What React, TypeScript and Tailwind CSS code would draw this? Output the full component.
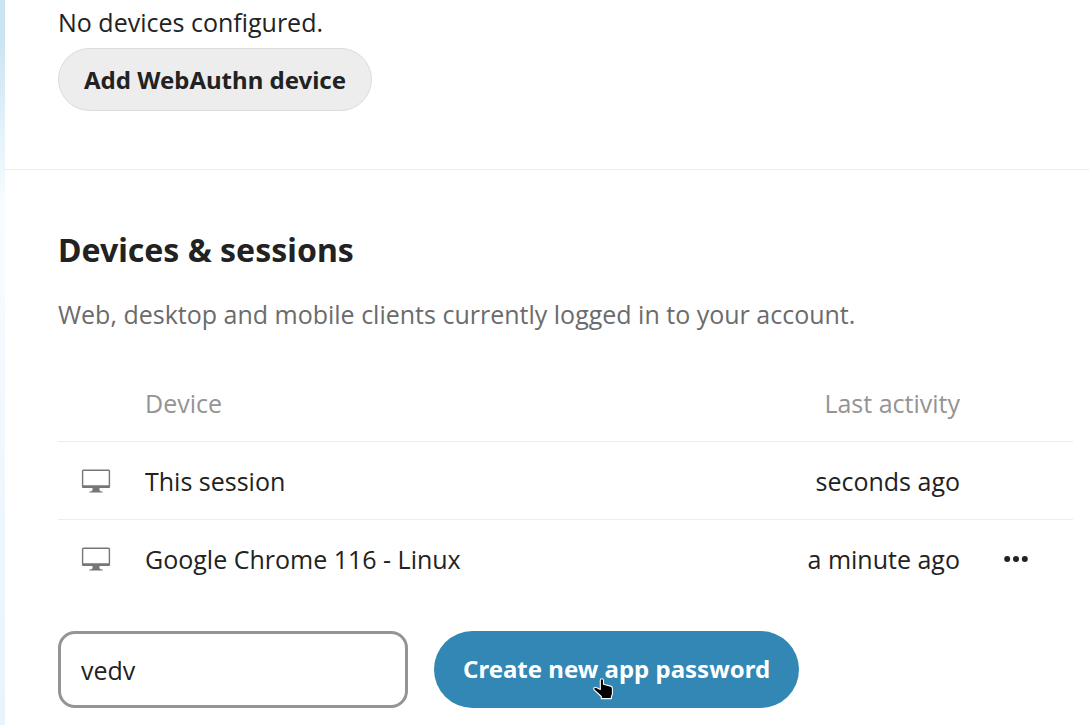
import { useState } from "react";

type Session = { name: string; activity: string; removable: boolean };

const sessions: Session[] = [
  { name: "This session", activity: "seconds ago", removable: false },
  { name: "Google Chrome 116 - Linux", activity: "a minute ago", removable: true },
];

function DesktopIcon() {
  return (
    <svg viewBox="0 0 30 26" className="h-[26px] w-[30px]" aria-hidden="true">
      <rect x="1.600" y="2.200" width="26.800" height="17" rx="0.800" fill="none" stroke="#767676" strokeWidth="1.400" />
      <path d="M1 17.200h28v1.700l-.8.800H1.800L1 18.900z" fill="#767676" />
      <path d="M11.500 19h7v3.300c.4 1 2 1 3.300 1.400v.9H8.200v-.9c1.300-.4 2.900-.4 3.300-1.400z" fill="#767676" />
    </svg>
  );
}

function DotsIcon() {
  return (
    <svg viewBox="0 0 24 8" className="h-2 w-6" fill="#222222" aria-hidden="true">
      <circle cx="3.200" cy="4" r="3" />
      <circle cx="12" cy="4" r="3" />
      <circle cx="20.800" cy="4" r="3" />
    </svg>
  );
}

function HandPointer() {
  return (
    <svg viewBox="0 0 20 22" className="pointer-events-none absolute top-[47px] left-[159px] h-[22px] w-5" aria-hidden="true">
      <path
        d="M7.300 2.300c0-2 3.200-2 3.200 0v4l7.200 1.800c1.300.4 1.700 1.200 1.700 2.500v5.600l-1 2.200v2.200H8.300v-2.100L1.200 11.800c-1.200-1.500.6-3.300 2.200-2.200l3.900 1.800z"
        fill="#000000"
        stroke="#ffffff"
        strokeWidth="1.100"
        strokeLinejoin="round"
      />
    </svg>
  );
}

export default function App() {
  const [name, setName] = useState("vedv");

  return (
    <div className="flex h-screen overflow-hidden bg-white font-['Open_Sans','Noto_Sans',sans-serif] text-[25px] leading-9 text-[#222222]">
      <div className="w-[5px] shrink-0 bg-linear-to-b from-[#cae4f2] from-5% via-[#f7fcff] via-28% to-[#e9f3fc]" />
      <main className="min-w-0 grow">
        <section className="border-b border-[#ededed] px-[53px] pt-1 pb-[58px]">
          <p>No devices configured.</p>
          <button
            type="button"
            className="mt-2 block h-[63px] rounded-full border border-[#dbdbdb] bg-[#ededed] px-[25px] font-['Noto_Sans',sans-serif] text-2xl font-bold"
          >
            Add WebAuthn device
          </button>
        </section>

        <section className="pt-[58px] pr-4 pl-[53px]">
          <h2 className="font-['Noto_Sans',sans-serif] text-[32px] leading-11 font-bold">Devices &amp; sessions</h2>
          <p className="mt-6 text-[#6b6b6b]">Web, desktop and mobile clients currently logged in to your account.</p>

          <table className="mt-8 w-full table-fixed border-collapse">
            <thead>
              <tr className="h-[77px] border-b border-[#ededed] text-[#949494]">
                <th className="w-[87px]" aria-label="Type" />
                <th className="pt-0.5 text-left font-normal">Device</th>
                <th className="w-[260px] pt-0.5 text-right font-normal">Last activity</th>
                <th className="w-[113px]" aria-label="Actions" />
              </tr>
            </thead>
            <tbody>
              {sessions.map((session) => (
                <tr key={session.name} className="h-[78px] border-b border-[#ededed] last:border-b-0">
                  <td className="pt-0.5 pl-[23px]">
                    <DesktopIcon />
                  </td>
                  <td className="pt-0.5">{session.name}</td>
                  <td className="pt-0.5 text-right">{session.activity}</td>
                  <td className="pt-0.5">
                    {session.removable && (
                      <button type="button" aria-label="Session actions" className="ml-11 flex h-11 items-center">
                        <DotsIcon />
                      </button>
                    )}
                  </td>
                </tr>
              ))}
            </tbody>
          </table>

          <form className="mt-[34px] flex gap-[26px]" onSubmit={(event) => event.preventDefault()}>
            <input
              type="text"
              aria-label="App name"
              value={name}
              onChange={(event) => setName(event.target.value)}
              className="h-[77px] w-[350px] rounded-[17px] border-3 border-[#949494] bg-white px-5 outline-none"
            />
            <button
              type="submit"
              className="relative h-[77px] rounded-full bg-[#3387b5] px-[29px] pb-0.5 font-['Noto_Sans',sans-serif] text-2xl font-bold text-white"
            >
              Create new app password
              <HandPointer />
            </button>
          </form>
        </section>
      </main>
    </div>
  );
}
